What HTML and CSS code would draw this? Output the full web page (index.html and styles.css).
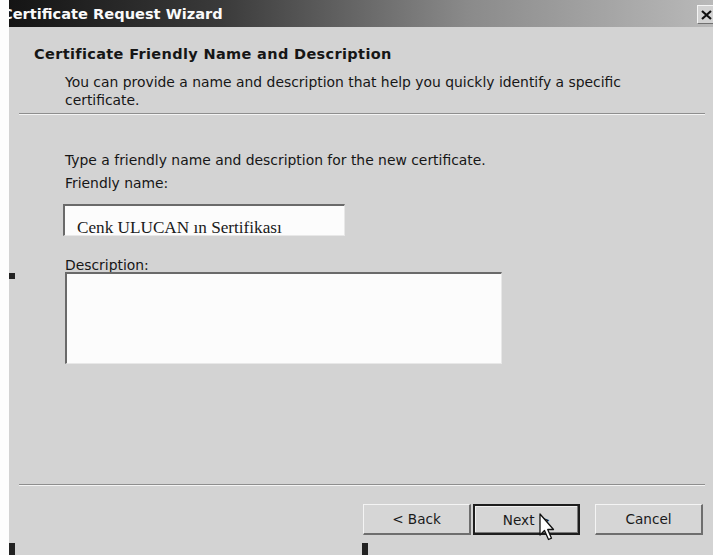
FILE: index.html
```html
<!DOCTYPE html>
<html lang="en">
<head>
<meta charset="utf-8">
<title>Certificate Request Wizard</title>
<link rel="stylesheet" href="styles.css">
</head>
<body>
<div class="page">
  <div class="edge"></div>
  <div class="dialog">
    <div class="titlebar">
      <span class="title">Certificate Request Wizard</span>
      <span class="close"><svg width="11" height="10" viewBox="0 0 11 10"><path d="M1 1 L10 9 M10 1 L1 9" stroke="#111" stroke-width="2.2"/></svg></span>
    </div>
    <div class="header">
      <h1 class="heading">Certificate Friendly Name and Description</h1>
      <p class="sub">You can provide a name and description that help you quickly identify a specific certificate.</p>
    </div>
    <div class="sep"></div>
    <div class="body">
      <p class="intro">Type a friendly name and description for the new certificate.</p>
      <label class="label">Friendly name:</label>
      <div class="field name"><span class="value">Cenk ULUCAN ın Sertifikası</span></div>
      <label class="label desc-label">Description:</label>
      <div class="field desc"></div>
    </div>
    <div class="sep"></div>
    <div class="buttons">
      <button class="btn">&lt; Back</button>
      <button class="btn default">Next &gt;</button>
      <button class="btn cancel">Cancel</button>
    </div>
  </div>
  <span class="handle h-left"></span>
  <span class="handle h-bl"></span>
  <span class="handle h-bm"></span>
  <svg class="pointer" width="17" height="30" viewBox="0 0 17 30">
    <path d="M1 1 L1 22 L5.5 17.5 L9.5 26.5 L12.5 25.2 L8.7 16.5 L14.5 16.5 Z" fill="#fff" stroke="#111" stroke-width="1.3" stroke-linejoin="round"/>
  </svg>
</div>
</body>
</html>
```

FILE: styles.css
```css
* { box-sizing: border-box; }

html, body {
  margin: 0;
  padding: 0;
  background: #fff;
}

.page {
  position: relative;
  display: flex;
  width: 713px;
  height: 555px;
  overflow: hidden;
  font-family: "DejaVu Sans", Verdana, sans-serif;
  font-size: 13.9px;
  color: #161616;
}

.edge {
  width: 9px;
  flex: none;
  background: #fdfdfd;
}

.dialog {
  flex: 1;
  display: flex;
  flex-direction: column;
  background: #d3d3d3;
}

/* caption bar */
.titlebar {
  height: 27px;
  flex: none;
  display: flex;
  align-items: center;
  justify-content: space-between;
  overflow: hidden;
  background: linear-gradient(to right, #141414 0%, #3a3a3a 30%, #8a8a8a 65%, #b9b9b9 100%);
}

.title {
  margin-left: -7px;
  color: #fafafa;
  font-weight: bold;
  font-size: 14.6px;
  white-space: nowrap;
}

.close {
  width: 18px;
  height: 19px;
  margin: 2px -2px 0 0;
  display: flex;
  align-items: center;
  justify-content: center;
  background: #d2d2d2;
  border-left: 1px solid #f4f4f4;
  border-top: 1px solid #f4f4f4;
  border-bottom: 1px solid #707070;
}

/* page header */
.header {
  height: 86px;
  flex: none;
  padding: 18px 0 0 25px;
}

.heading {
  margin: 0;
  font-size: 14.5px;
  letter-spacing: 0.35px;
  font-weight: bold;
  line-height: 18px;
}

.sub {
  margin: 10px 60px 0 31px;
  line-height: 18px;
}

.sep {
  height: 2px;
  flex: none;
  margin: 0 8px 0 10px;
  border-top: 1px solid #8e8e8e;
  border-bottom: 1px solid #f4f4f4;
}

/* form body */
.body {
  height: 369px;
  flex: none;
  display: flex;
  flex-direction: column;
  align-items: flex-start;
  padding: 36px 0 0 56px;
}

.intro {
  margin: 0;
  line-height: 18px;
}

.label {
  margin-top: 5px;
  line-height: 18px;
}

.field {
  background: #fcfcfc;
  border-top: 2px solid #6a6a6a;
  border-left: 2px solid #6a6a6a;
  border-right: 1px solid #e8e8e8;
  border-bottom: 1px solid #e8e8e8;
}

.name {
  margin: 12px 0 0 -2px;
  width: 282px;
  height: 32px;
  overflow: hidden;
  padding: 12px 0 0 12px;
  font-family: "Liberation Serif", "Times New Roman", serif;
  font-size: 17.2px;
  line-height: 20px;
  white-space: nowrap;
  color: #1a1a1a;
}

.desc-label {
  margin-top: 20px;
}

.desc {
  margin-top: -2px;
  width: 437px;
  height: 92px;
}

/* command buttons */
.buttons {
  flex: 1;
  display: flex;
  align-items: flex-start;
  justify-content: flex-end;
  padding: 18px 10px 0 0;
}

.btn {
  width: 108px;
  height: 31px;
  padding: 0;
  margin: 0;
  font-family: inherit;
  font-size: 13.6px;
  color: #1a1a1a;
  background: #d6d6d6;
  border-top: 1px solid #f4f4f4;
  border-left: 1px solid #f4f4f4;
  border-right: 2px solid #6e6e6e;
  border-bottom: 2px solid #6e6e6e;
}

.default {
  margin-left: 2px;
  width: 107px;
  border: 2px solid #1e1e1e;
  box-shadow: inset -1px -1px 0 #7a7a7a, inset 1px 1px 0 #f0f0f0;
}

.cancel {
  margin-left: 15px;
}

/* screen-capture markers */
.handle {
  position: absolute;
  width: 6px;
  background: #222;
}
.h-left { left: 9px; top: 273px; height: 6px; }
.h-bl { left: 9px; top: 543px; height: 12px; }
.h-bm { left: 362px; top: 543px; height: 12px; }

.pointer {
  position: absolute;
  left: 539px;
  top: 513px;
}
```
